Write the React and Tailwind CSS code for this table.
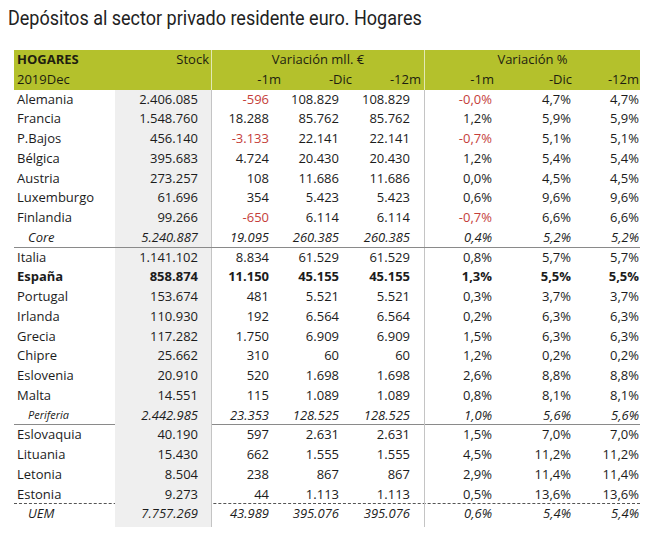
import React from "react";

const rows = [
  ["Alemania", "2.406.085", "-596", "108.829", "108.829", "-0,0%", "4,7%", "4,7%", { r1: true, r4: true }],
  ["Francia", "1.548.760", "18.288", "85.762", "85.762", "1,2%", "5,9%", "5,9%", {}],
  ["P.Bajos", "456.140", "-3.133", "22.141", "22.141", "-0,7%", "5,1%", "5,1%", { r1: true, r4: true }],
  ["Bélgica", "395.683", "4.724", "20.430", "20.430", "1,2%", "5,4%", "5,4%", {}],
  ["Austria", "273.257", "108", "11.686", "11.686", "0,0%", "4,5%", "4,5%", {}],
  ["Luxemburgo", "61.696", "354", "5.423", "5.423", "0,6%", "9,6%", "9,6%", {}],
  ["Finlandia", "99.266", "-650", "6.114", "6.114", "-0,7%", "6,6%", "6,6%", { r1: true, r4: true }],
  ["Core", "5.240.887", "19.095", "260.385", "260.385", "0,4%", "5,2%", "5,2%", { sum: true, line: "solid" }],
  ["Italia", "1.141.102", "8.834", "61.529", "61.529", "0,8%", "5,7%", "5,7%", {}],
  ["España", "858.874", "11.150", "45.155", "45.155", "1,3%", "5,5%", "5,5%", { bold: true }],
  ["Portugal", "153.674", "481", "5.521", "5.521", "0,3%", "3,7%", "3,7%", {}],
  ["Irlanda", "110.930", "192", "6.564", "6.564", "0,2%", "6,3%", "6,3%", {}],
  ["Grecia", "117.282", "1.750", "6.909", "6.909", "1,5%", "6,3%", "6,3%", {}],
  ["Chipre", "25.662", "310", "60", "60", "1,2%", "0,2%", "0,2%", {}],
  ["Eslovenia", "20.910", "520", "1.698", "1.698", "2,6%", "8,8%", "8,8%", {}],
  ["Malta", "14.551", "115", "1.089", "1.089", "0,8%", "8,1%", "8,1%", {}],
  ["Periferia", "2.442.985", "23.353", "128.525", "128.525", "1,0%", "5,6%", "5,6%", { sum: true, small: true, line: "solid" }],
  ["Eslovaquia", "40.190", "597", "2.631", "2.631", "1,5%", "7,0%", "7,0%", {}],
  ["Lituania", "15.430", "662", "1.555", "1.555", "4,5%", "11,2%", "11,2%", {}],
  ["Letonia", "8.504", "238", "867", "867", "2,9%", "11,4%", "11,4%", {}],
  ["Estonia", "9.273", "44", "1.113", "1.113", "0,5%", "13,6%", "13,6%", { line: "dashed" }],
  ["UEM", "7.757.269", "43.989", "395.076", "395.076", "0,6%", "5,4%", "5,4%", { sum: true }],
];

const cols = "grid grid-cols-[101px_97px_71px_70px_72px_70px_78px_67px]";

function Row({ r }) {
  const [label, stock, m1, md, m12, p1, pd, p12, o] = r;
  const red = "text-[#c53e3a]";
  const line =
    o.line === "solid"
      ? "border-b border-[#8a8a8a]"
      : o.line === "dashed"
      ? "border-b border-dashed border-[#555]"
      : "";
  const style = `${o.sum ? "italic" : ""} ${o.bold ? "font-bold" : ""}`;
  return (
    <div className={`${cols} h-[19.75px] items-stretch ${line} ${style}`}>
      <div
        className={`flex items-center ${o.sum ? "pl-[14px]" : "pl-[3px]"} ${o.small ? "text-[11px]" : ""}`}
      >
        {label}
      </div>
      <div className="flex items-center justify-end pr-[13px] bg-[#efefef] border-r border-[#c4c4c4]">{stock}</div>
      <div className={`flex items-center justify-end pr-[14px] ${o.r1 ? red : ""}`}>{m1}</div>
      <div className="flex items-center justify-end pr-[14px]">{md}</div>
      <div className="flex items-center justify-end pr-[14px] border-r border-[#c4c4c4]">{m12}</div>
      <div className={`flex items-center justify-end pr-[3px] ${o.r4 ? red : ""}`}>{p1}</div>
      <div className="flex items-center justify-end pr-[2px]">{pd}</div>
      <div className="flex items-center justify-end pr-[1px]">{p12}</div>
    </div>
  );
}

export default function App() {
  return (
    <div className="w-[669px] h-[535px] bg-white text-[#1c1c1c] overflow-hidden">
      <div className="pt-[4px] pl-[8px] h-[32px] text-[20px] leading-[28px] text-[#222] font-['Roboto',sans-serif] whitespace-nowrap">
        <span className="inline-block origin-left scale-x-[0.9]">Depósitos al sector privado residente euro. Hogares</span>
      </div>
      <div className="mt-[18px] ml-[14px] w-[626px] text-[13px] font-['Open_Sans',sans-serif]">
        <div className="bg-[#b4c12c] text-[#1e1e10]">
          <div className={`${cols} h-[20px]`}>
            <div className="flex items-center pl-[3px] font-bold">HOGARES</div>
            <div className="flex items-center justify-end pr-[2px] border-r border-[#e3e8b4]">Stock</div>
            <div className="col-span-3 flex items-center justify-center border-r border-[#e3e8b4]">Variación mll. €</div>
            <div className="col-span-3 flex items-center justify-center">Variación %</div>
          </div>
          <div className={`${cols} h-[19.5px]`}>
            <div className="flex items-center pl-[3px]">2019Dec</div>
            <div className="border-r border-[#e3e8b4]"></div>
            <div className="flex items-center justify-end pr-[2px]">-1m</div>
            <div className="flex items-center justify-end pr-[1px]">-Dic</div>
            <div className="flex items-center justify-end pr-[3px] border-r border-[#e3e8b4]">-12m</div>
            <div className="flex items-center justify-end pr-[1px]">-1m</div>
            <div className="flex items-center justify-end pr-[1px]">-Dic</div>
            <div className="flex items-center justify-end pr-[1px]">-12m</div>
          </div>
        </div>
        {rows.map((r, i) => (
          <Row key={i} r={r} />
        ))}
        <div className={`${cols} h-[3px]`}>
          <div></div>
          <div className="bg-[#efefef] border-r border-[#c4c4c4]"></div>
          <div></div>
          <div></div>
          <div className="border-r border-[#c4c4c4]"></div>
        </div>
      </div>
    </div>
  );
}
